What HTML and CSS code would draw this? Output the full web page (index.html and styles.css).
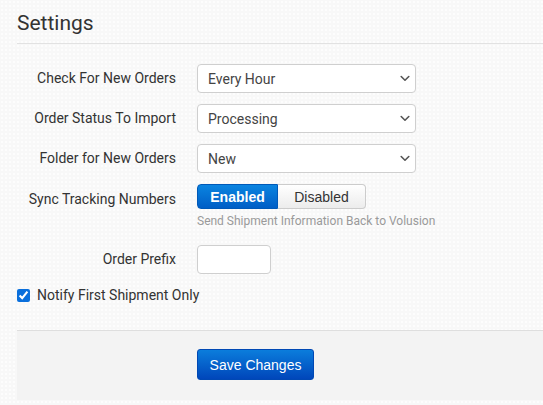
FILE: index.html
```html
<!DOCTYPE html>
<html>
<head>
<meta charset="utf-8">
<link rel="stylesheet" href="styles.css">
</head>
<body>
<div class="page">
  <h1 class="title">Settings</h1>
  <div class="form">
    <div class="row">
      <div class="label">Check For New Orders</div>
      <div class="select"><span>Every Hour</span><svg class="chev" width="10" height="7" viewBox="0 0 10 7"><path d="M1.2 1.5 L5 5.2 L8.8 1.5" fill="none" stroke="#555" stroke-width="1.6" stroke-linecap="round" stroke-linejoin="round"/></svg></div>
    </div>
    <div class="row">
      <div class="label">Order Status To Import</div>
      <div class="select"><span>Processing</span><svg class="chev" width="10" height="7" viewBox="0 0 10 7"><path d="M1.2 1.5 L5 5.2 L8.8 1.5" fill="none" stroke="#555" stroke-width="1.6" stroke-linecap="round" stroke-linejoin="round"/></svg></div>
    </div>
    <div class="row">
      <div class="label">Folder for New Orders</div>
      <div class="select"><span>New</span><svg class="chev" width="10" height="7" viewBox="0 0 10 7"><path d="M1.2 1.5 L5 5.2 L8.8 1.5" fill="none" stroke="#555" stroke-width="1.6" stroke-linecap="round" stroke-linejoin="round"/></svg></div>
    </div>
    <div class="row">
      <div class="label label-toggle">Sync Tracking Numbers</div>
      <div class="control">
        <div class="toggle">
          <span class="tbtn on">Enabled</span><span class="tbtn off">Disabled</span>
        </div>
        <div class="help">Send Shipment Information Back to Volusion</div>
      </div>
    </div>
    <div class="row">
      <div class="label">Order Prefix</div>
      <div class="input"></div>
    </div>
    <label class="check">
      <input type="checkbox" checked>
      <span>Notify First Shipment Only</span>
    </label>
  </div>
  <div class="footer">
    <button class="save">Save Changes</button>
  </div>
</div>
</body>
</html>
```

FILE: styles.css
```css
html, body {
  margin: 0;
  padding: 0;
}
body {
  background-color: #f8f8f8;
  background-image: radial-gradient(#fdfdfd 0.8px, transparent 1px);
  background-size: 4px 4px;
  font-family: Roboto, "Liberation Sans", sans-serif;
  color: #333;
  height: 405px;
  overflow: hidden;
}
.page {
  padding-left: 17px;
}
.title {
  margin: 0;
  font-weight: 400;
  font-size: 21px;
  line-height: 24px;
  padding: 11px 0 8px 0;
  border-bottom: 1px solid #e2e2e2;
  color: #333;
}
.form {
  padding-top: 20px;
}
.row {
  display: flex;
  align-items: flex-start;
  gap: 21px;
  margin-bottom: 11px;
}
.label {
  width: 159px;
  flex: 0 0 159px;
  text-align: right;
  font-size: 14px;
  line-height: 29px;
  color: #333;
  white-space: nowrap;
}
.label-toggle {
  padding-top: 1px;
}
.select {
  box-sizing: border-box;
  width: 219px;
  height: 29px;
  background: #fff;
  border: 1px solid #cfcfcf;
  border-radius: 4px;
  display: flex;
  align-items: center;
  padding: 0 5px 0 10px;
  font-size: 14px;
  color: #444;
}
.select .chev {
  margin-left: auto;
}
.control {
  display: flex;
  flex-direction: column;
}
.toggle {
  display: flex;
  height: 25px;
}
.tbtn {
  box-sizing: border-box;
  display: flex;
  align-items: center;
  justify-content: center;
  font-family: "Liberation Sans", Arial, sans-serif;
  font-size: 14px;
}
.tbtn.on {
  width: 81px;
  color: #fff;
  font-weight: 700;
  background: linear-gradient(#0a84e0, #005ec6);
  border: 1px solid #0059b8;
  border-radius: 4px 0 0 4px;
}
.tbtn.off {
  width: 88px;
  color: #333;
  background: linear-gradient(#ffffff, #ececec);
  border: 1px solid #cccccc;
  border-left: none;
  border-radius: 0 4px 4px 0;
}
.help {
  margin-top: 4px;
  margin-bottom: 5px;
  font-size: 12px;
  line-height: 16px;
  color: #9a9a9a;
}
.input {
  box-sizing: border-box;
  width: 74px;
  height: 29px;
  background: #fff;
  border: 1px solid #cfcfcf;
  border-radius: 4px;
}
.check {
  display: flex;
  align-items: center;
  height: 20px;
  font-size: 14px;
  color: #333;
  margin-top: 0;
}
.check input {
  width: 13px;
  height: 13px;
  margin: 0 7px 0 0;
  accent-color: #0a6fdc;
}
.footer {
  margin-top: 25px;
  background: #f3f3f3;
  border-top: 1px solid #dedede;
  padding-left: 180px;
  padding-top: 18px;
  box-sizing: border-box;
  height: 70px;
}
.save {
  box-sizing: border-box;
  width: 117px;
  height: 31px;
  font-family: "Liberation Sans", Arial, sans-serif;
  font-size: 14px;
  color: #fff;
  background: linear-gradient(#0b7ddc, #0046ba);
  border: 1px solid #0048b4;
  border-radius: 3px;
  padding: 0;
}
```
